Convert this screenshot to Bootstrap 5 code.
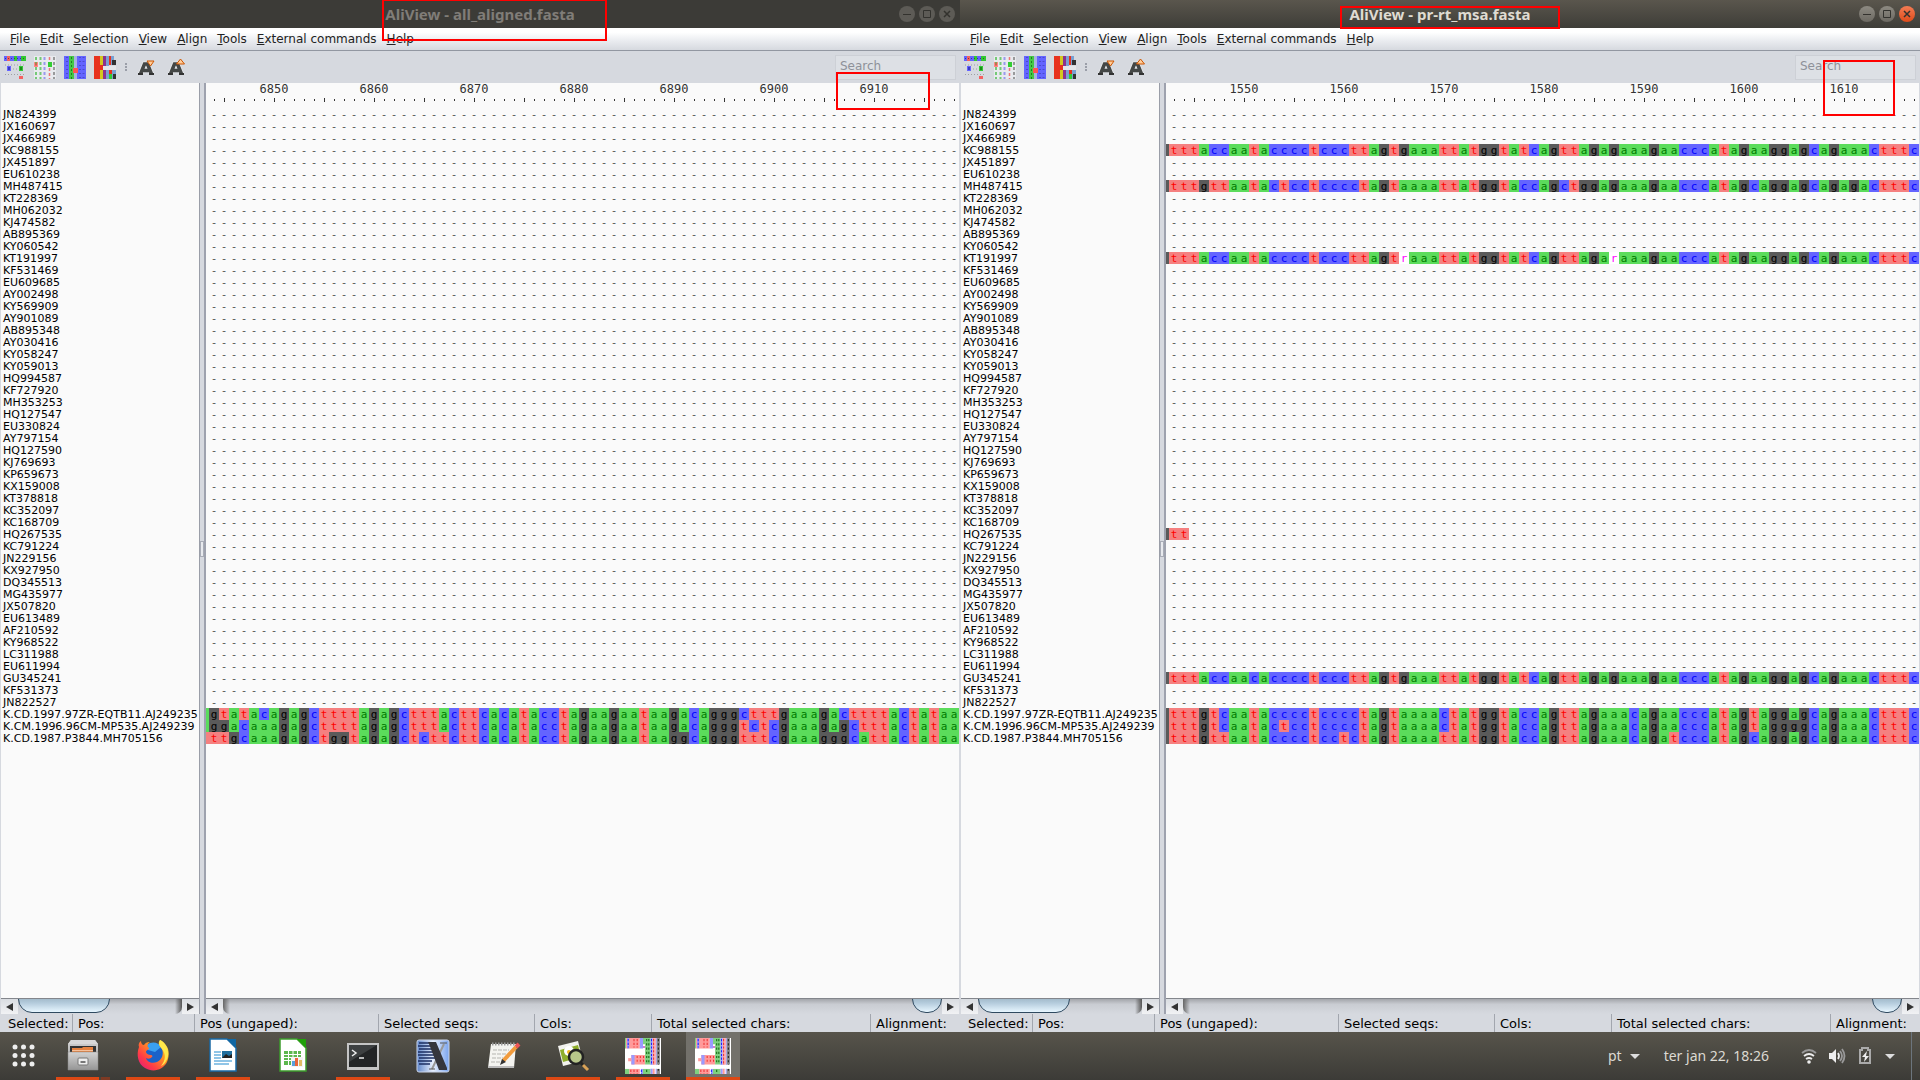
<!DOCTYPE html>
<html lang="en">
<head>
<meta charset="utf-8">
<meta name="viewport" content="width=device-width, initial-scale=1">
<title>AliView</title>
<link href="https://cdn.jsdelivr.net/npm/bootstrap@5.3.0/dist/css/bootstrap.min.css" rel="stylesheet">
<style>
body{font-family:"DejaVu Sans",sans-serif;font-size:12px;line-height:16px;color:#000;background:#3c3b37}
button{border:0;background:none;padding:0;color:inherit}
a{color:inherit;text-decoration:none}
.win{background:#d6d9df;flex:1 1 0;min-width:0}
.titlebar{height:28px;background:#3c3b37;color:#807d78;font:bold 15px/28px "Noto Sans",sans-serif}
.win.active .titlebar{background:linear-gradient(#5a564d,#3e3d38);color:#dfdbd2}
.winbtns{top:6px;right:5px;gap:4px}
.winbtns button{width:16px;height:16px;border-radius:50%;background:#5d5b56;color:#33322e;display:flex}
.active .winbtns button{background:linear-gradient(#8d8a82,#6c6962)}
.active .winbtns .quit{background:linear-gradient(#f47c54,#df4b1a)}
.menubar{height:23px;padding:0 10px;gap:10px;background:linear-gradient(#fff 20%,#e9ebef 60%,#d6d9df);border-bottom:1px solid #9297a1;color:#222}
.menubar a::first-letter{text-decoration:underline}
.toolbar{height:32px;padding:0 4px}
.tbtn{width:22px;height:23px;margin-right:8px;display:block}
.dots{width:2px;height:8px;margin:0 8px 0 1px;border-left:2px dotted #9a9ea8}
.search{width:121px;height:25px;border:1px solid #cdd0d6;background:#dde0e5;padding:0 4px 2px;font-size:12px;color:#555}
.search::placeholder{color:#8e9199;opacity:1}
.names{width:200px;flex:none;background:#fafafa;border-left:1px solid #d6d9df;border-right:1px solid #9a9ea8;overflow:hidden}
.names ul{padding:26px 0 0 2px;margin:0;font-size:11px;line-height:12px;white-space:nowrap}
.splitter{width:6px;flex:none;border-right:2px solid #9ea2ae;background:#d6d9df;display:flex;align-items:center}
.splitter i{width:4px;height:16px;border:1px solid #a9adb7;background:#e8eaee}
.align-pane{background:#fafafa;overflow:hidden;flex:1 1 0;min-width:0;margin-right:1px}
.ruler{height:25px;padding-left:3px;font:12px/13px "DejaVu Sans Mono",monospace;color:#333}
.rc{width:10px;flex:none;height:19px;display:flex;flex-direction:column;align-items:center;justify-content:space-between}
.rc b{font-weight:400;width:40px;text-align:center;height:13px}
.rc i{width:1px;height:2px;background:#333;margin-top:auto;margin-bottom:1px}
.rc.five i{height:4px;margin-bottom:0}
.seq{height:12px;display:flex;font:11px/13px "DejaVu Sans Mono",monospace;color:#555}
.seq span{width:10px;flex:none;text-align:center;height:12px;overflow:hidden}
.seq span:first-child{width:3px}
.sa{background:#5bdc5b;color:#007a00}.sc{background:#6464ff;color:#00f}.sg{background:#5a5a5a;color:#000}.st{background:#f58080;color:#f00}.sr{background:#fff;color:#f0f}
.scroller{height:16px;display:flex;overflow:hidden;border-top:1px solid #83868c;background:linear-gradient(#a3a5aa,#c9ccd2 35%,#d6d9df)}
.scroller button{width:17px;flex:none;background:linear-gradient(#d9dce1,#f1f2f4);display:flex;align-items:center;justify-content:center}
.scroller button::before{content:"";border:4px solid transparent;border-right:7px solid #333;border-left:0}
.scroller button.fwd::before{border-left:7px solid #333;border-right:0}
.thumb{height:28px;margin-top:-14px;border:1px solid #2f4a60;border-radius:14px;background:linear-gradient(#a4bccc 50%,#b4cbdc 65%,#e7f6ff)}
.curve{width:7px;border-radius:0 0 14px 0;background:linear-gradient(90deg,transparent,#555)}
.curve.l{border-radius:0 0 0 14px;background:linear-gradient(270deg,transparent,#666)}
.status{height:18px;font-size:13px;line-height:20px}
.status div{border-left:1px solid #a2a6ae;padding-left:5px;white-space:nowrap;flex:none}
.status div:first-child{border:0;padding-left:8px;width:72px}
.w1{width:122px}.w2{width:184px}.w3{width:156px}.w4{width:117px}.w5{width:219px}
.dock{height:48px;background:linear-gradient(#57544b,#3c3b37);color:#dcd9d2;font:bold 14px/48px "Noto Sans",sans-serif}
.launch{gap:16px}
.launch button{width:54px;height:48px;border-bottom:3px solid transparent;display:flex;align-items:center;justify-content:center;padding-top:3px}
.launch button svg{width:36px;height:36px;display:block}
.launch .apps{width:40px;padding-left:4px}
.launch .run{border-bottom-color:#dd4814}
.launch .multi{border-image:linear-gradient(90deg,#dd4814 76%,#4a443c 76%,#4a443c 80%,#7d3a24 80%) 3}
.launch .sel{background:#73716b}
.tray{padding-right:8px}
.tray button{display:flex;align-items:center}
.caret{border:5px solid transparent;border-top:5px solid #ddd;border-bottom:0}
.note{position:absolute;border:2px solid #f00;pointer-events:none;z-index:5}
.n1{left:382px;top:-1px;width:225px;height:42px}
.n2{right:30px;top:72px;width:94px;height:38px}
.n3{left:380px;top:6px;width:220px;height:23px}
.n4{right:25px;top:60px;width:72px;height:56px}
</style>
<script src="https://cdn.jsdelivr.net/npm/bootstrap@5.3.0/dist/js/bootstrap.bundle.min.js"></script>
</head>
<body class="vh-100 d-flex flex-column overflow-hidden">
<svg width="0" height="0" class="position-absolute" aria-hidden="true">
<defs>
<linearGradient id="fx" x1="1" y1="0" x2="0" y2="1"><stop offset="0" stop-color="#fff44f"/><stop offset=".35" stop-color="#ff9a1f"/><stop offset=".7" stop-color="#ff3b47"/><stop offset="1" stop-color="#d9148a"/></linearGradient>
<linearGradient id="gr" x1="0" y1="0" x2="0" y2="1"><stop offset="0" stop-color="#d2d2d2"/><stop offset="1" stop-color="#969696"/></linearGradient>
<linearGradient id="bx" x1="0" y1="0" x2="1" y2="0"><stop offset="0" stop-color="#5f86c9"/><stop offset=".5" stop-color="#e8f0ff"/><stop offset="1" stop-color="#7aa4ee"/></linearGradient>
<symbol id="ali" viewBox="0 0 34 34"><path fill="#fff" d="M0 0h34v34H0z"/><path fill="#ff9a9a" d="M1 0h13v10H1zM6 16h13v9H6zM26 0h2v34h-2zM4 29h10v5H4z"/><path fill="#9a9aff" d="M2 0h2v10H2zM14 0h3v10h-3zM6 16h3v9H6zM24 0h2v34h-2zM15 29h2v5h-2zM29 0h1v34h-1z"/><path fill="#7fd07f" d="M0 0h1v10H0zM17 0h7v6h-7zM19 6h5v19h-5zM17 29h7v5h-7zM0 29h4v5H0z"/><path fill="#8a8a8a" d="M30 0h3v25h-3zM30 29h3v5h-3z"/><path fill="#ff9a9a" d="M28 0h1v25h-1z"/><path stroke="#e33" stroke-dasharray="2 1.500" d="M8.500 1v8M11.500 1v8M11.500 17v7M14.500 17v7M17.500 17v7M27 1v23M8.500 30v4M5.500 30v4M11.500 30v4"/><path stroke="#161" stroke-dasharray="2 2" d="M20.500 1v23M22.500 1v23M20.500 30v4"/><path stroke="#22f" stroke-dasharray="2 1.500" d="M3 1v8M15.500 30v4M25 1v23"/><path stroke="#222" stroke-dasharray="2 2" d="M31.500 1v32"/><path fill="#ff9a9a" d="M3 19h3v3H3z"/><path fill="#fff" d="M0 25.500h34v3.500H0z"/><path fill="#a0a" d="M17 8h2v1h-2z"/></symbol>
<symbol id="t1" viewBox="0 0 22 23"><path fill="#6464ff" d="M0 0h3v5H0zM6 0h4v5H6zM13 0h4v5h-4zM3 10h4v5H3z"/><path fill="#f56060" d="M3 0h3v5H3zM15 20h4v3h-4z"/><path fill="#32c832" d="M10 0h3v5h-3zM17 0h5v5h-5zM15 10h4v5h-4z"/><path stroke="#222" stroke-opacity=".6" stroke-dasharray="1 2" d="M1 2.500h21"/><path stroke="#888" stroke-opacity=".7" stroke-dasharray="1 2" d="M1 9h21M9 13h6M1 18.500h21"/><path stroke="#118" d="M5 11v3"/><path stroke="#050" d="M17 11v3"/></symbol>
<symbol id="t2" viewBox="0 0 22 23"><path fill="#e8eaee" d="M0 0h22v23H0z"/><path fill="#f88" d="M0 6h4v5H0z"/><path fill="#3c3" d="M14 6h4v5h-4z"/><g stroke-dasharray="3 2" stroke-opacity=".7"><path stroke="#4b4" stroke-width="2" d="M2 1v22M6.500 1v22"/><path stroke="#77e" stroke-width="2" d="M10.500 1v22"/><path stroke="#e44" stroke-width="1.500" d="M15.500 1v5M15.500 12v11M2 7v3"/><path stroke="#777" stroke-width="2" d="M20 1v22"/></g></symbol>
<symbol id="t3" viewBox="0 0 22 23"><path fill="#6464ff" d="M0 0h22v23H0z"/><path fill="#46c846" d="M5 0h5v23H5z"/><path fill="#a9b4e0" d="M10 0h3v23h-3z"/><path fill="#f55" d="M9 12h5v5H9z"/><path stroke="#228" stroke-opacity=".4" stroke-width="2" stroke-dasharray="1 3" d="M3 1v22M16 1v22M19.500 1v22"/><path stroke="#050" stroke-opacity=".6" stroke-dasharray="2 2" d="M7.500 1v22"/></symbol>
<symbol id="t4" viewBox="0 0 22 23"><path fill="#e8321e" d="M0 0h6v23H0z"/><path fill="#d4c81e" d="M6 0h3v9H6zM6 14h3v9H6z"/><path fill="#e8321e" d="M6 9h3v5H6z"/><path fill="#8c328c" d="M9 0h3v23H9z"/><path fill="#7aa0d2" d="M12 0h3v23h-3zM17 0h3v9h-3zM18 14h4v9h-4z"/><path fill="#e8321e" d="M15 0h2v9h-2zM15 14h3v4h-3z"/><path fill="#333" d="M18 4h4v5h-4zM19 18h3v5h-3z"/><path fill="#3c3" d="M15 18h3v5h-3z"/><path fill="#e4e6ea" d="M9 10h13v4H9z"/></symbol>
<symbol id="bigA" viewBox="0 0 22 23"><path fill="none" stroke="#f4f4f4" stroke-opacity=".6" stroke-width="5" d="M5.500 18 9.500 8h3l4 10"/><path fill="none" stroke="#444746" stroke-width="3.500" d="M5.500 18 9.500 8h3l4 10M7 14.500h8"/><path stroke="#333" stroke-width="2" d="M3 18h5M14 18h5"/></symbol>
</defs></svg>

<main class="d-flex flex-grow-1" id="desk" style="min-height:0"></main>

<footer class="dock d-flex justify-content-between">
<div class="launch d-flex">
<button class="apps" aria-label="Show applications"><svg viewBox="0 0 36 36" fill="#eee"><g id="dr"><circle cx="11" cy="9" r="2.500"/><circle cx="19.500" cy="9" r="2.500"/><circle cx="28" cy="9" r="2.500"/></g><use href="#dr" y="8.500"/><use href="#dr" y="17"/></svg></button>
<button class="run multi" aria-label="Files"><svg viewBox="0 0 36 36"><path fill="url(#gr)" d="M6 2h24l3 4v26H3V6z"/><path fill="#d8d8d8" d="M6 2h24l3 4H3z"/><path fill="#333" d="M5 8h26v7H5z"/><path fill="#e58240" d="M7 10h10l1-1h10v6H7z"/><path fill="#f6c09a" d="M7 12h21v1H7z"/><path fill="url(#gr)" stroke="#888" stroke-width=".5" d="M3 14h30v18H3z"/><rect x="13" y="20" width="10" height="7" rx="1" fill="#eee" stroke="#777"/><path fill="#777" d="M15.500 23h5v2h-5z"/></svg></button>
<button class="run" aria-label="Firefox"><svg viewBox="0 0 36 36"><circle cx="18" cy="17" r="12" fill="#1b62c9"/><path fill="#3aa0f0" d="M12 7c4-4 12-3 14 2l-6 5-7-2z"/><path fill="url(#fx)" d="M4 9c-3 8-1 17 6 21 8 5 18 2 22-6 3-7 2-14-2-18-1-2-3-3-5-4-3 4 0 6 2 9 2 5 0 11-5 13-5 2-10 0-11-4 2 1 4 1 6-1 1-1 0-2-1-2-3 0-5-2-5-3 0-2 3-2 3-4-2-1-2-4 1-6-3 0-5 1-6 3-2 0-3-2-3-4-2 1-3 4-2 6z"/><path fill="#ffe74a" d="M25 2c6 3 9 10 8 16-1 5-4 9-7 10 5-6 5-12 1-17-2-3-4-5-2-9z"/></svg></button>
<button class="run" aria-label="Writer"><svg viewBox="0 0 36 36"><path fill="#fff" stroke="#1a6aa5" stroke-width="1.500" d="M5 1h17l9 9v23H5z"/><path fill="#0f67a3" d="M22 1h9v9z"/><path fill="#1f6f9f" d="M17 13h10v7H17z"/><path fill="#222" d="m17 20 4-4 3 2 3-2v4z"/><path stroke="#6cb2e0" stroke-width="1.500" d="M9 14h7M9 17h7M9 20h7M9 23h18M9 26h15"/></svg></button>
<button aria-label="Calc"><svg viewBox="0 0 36 36"><path fill="#fff" stroke="#3c9c2c" stroke-width="1.500" d="M5 1h17l9 9v23H5z"/><path fill="#1fa008" d="M22 1h9v9z"/><path fill="#5cb74d" d="M9 13h17v14H9z"/><path stroke="#fff" d="M9 16.500h17M9 19.500h17M9 22.500h17M13.500 13v14M18 13v14M22.500 13v14"/><path fill="#f4f4f4" d="M16 19h12v10H16z"/><path fill="#5a9fdc" d="M17 23h3v5h-3z"/><path fill="#e8663a" d="M20 20h3v8h-3z"/><path fill="#e0bd65" d="M24 22h3v6h-3z"/></svg></button>
<button class="run" aria-label="Terminal"><svg viewBox="0 0 36 36"><path fill="#c5c5c5" d="M2 5h32v27H2z"/><path fill="#232526" d="M4 7h28v22H4z"/><path fill="#3d4041" d="M4 7h28L4 24z"/><path fill="none" stroke="#eee" stroke-width="1.500" d="m7 12 4 3-4 3M14 20h5"/></svg></button>
<button aria-label="X viewer"><svg viewBox="0 0 36 36"><rect x="2" y="2" width="32" height="32" rx="2" fill="url(#bx)" stroke="#ccd6ea"/><path stroke="#1c2f63" stroke-width="1.500" d="M4 5h12M3 8h13M4 11h14M3 14h17M3 17h17M4 20h16M3 23h14M4 26h11"/><path stroke="#999" stroke-width="2" d="M29 6 17 31"/><path fill="#35363d" d="M13 4h8l11 26v2h-8L14 6z"/><path stroke="#555" d="M25 5h7M14 31h6"/></svg></button>
<button aria-label="Text editor"><svg viewBox="0 0 36 36"><path fill="#f4f4f0" d="M6 6h25l-2 24H3z"/><path fill="#bbb" d="M3 28h26v2H3z"/><path stroke="#999" stroke-width="3" stroke-dasharray="1.500 1.500" d="M7 6h23"/><path stroke="#b5b5b0" stroke-dasharray="4 1" d="M8 12h16M7 16h15M7 20h11M6 24h11"/><path stroke="#f19b3c" stroke-width="4" d="m31 9-13 14"/><path stroke="#e55" stroke-width="4" d="m34 6-3 3"/><path fill="#333" d="m15 27 2-6 4 3z"/></svg></button>
<button class="run" aria-label="Image viewer"><svg viewBox="0 0 36 36"><path fill="#f2f2ee" d="m3 8 20-5 5 20-20 5z"/><path fill="#8fae2c" d="m5 12 18-5 3 12-18 5z"/><circle cx="14" cy="13" r="5" fill="#fff"/><circle cx="14" cy="14" r="2" fill="#f2b721"/><circle cx="21" cy="19" r="7" fill="#b7c68a" stroke="#222" stroke-width="2.500"/><path stroke="#222" stroke-width="3" d="m26 25 3 3"/><path stroke="#d9a257" stroke-width="3" d="m28 27 5 5"/></svg></button>
<button class="run" aria-label="AliView all_aligned"><svg><use href="#ali"/></svg></button>
<button class="run sel" aria-label="AliView pr-rt_msa"><svg><use href="#ali"/></svg></button>
</div>
<div class="tray d-flex">
<button class="me-4">pt<i class="caret ms-2"></i></button>
<button class="me-4">ter jan 22, 18:26</button>
<button class="ms-2" aria-label="System"><svg width="84" height="20" viewBox="0 0 84 20" fill="none" stroke-width="1.800"><path stroke="#999" d="M1 7q7-6 14 0"/><path stroke="#eee" d="M3 10q5-4 10 0M5 13q3-2 6 0"/><circle cx="8" cy="16" r="1.800" fill="#eee"/><path fill="#eee" d="M28 7h3l4-4v14l-4-4h-3z"/><path stroke="#eee" d="M37 7q2 3 0 6"/><path stroke="#999" d="M39 5q4 5 0 10M41 3q5 7 0 14"/><path stroke="#aaa" stroke-width="2" d="M59 4h2V2h6v2h2v13H59z"/><path fill="#eee" d="m66 5-5 6h3l-1 5 5-6h-3z"/></svg></button>
<button class="pe-3 ps-0 border-end border-secondary" aria-label="Power menu"><i class="caret"></i></button>
</div>
</footer>

<script>
const names = `JN824399 JX160697 JX466989 KC988155 JX451897 EU610238 MH487415 KT228369 MH062032 KJ474582 AB895369 KY060542 KT191997 KF531469 EU609685 AY002498 KY569909 AY901089 AB895348 AY030416 KY058247 KY059013 HQ994587 KF727920 MH353253 HQ127547 EU330824 AY797154 HQ127590 KJ769693 KP659673 KX159008 KT378818 KC352097 KC168709 HQ267535 KC791224 JN229156 KX927950 DQ345513 MG435977 JX507820 EU613489 AF210592 KY968522 LC311988 EU611994 GU345241 KF531373 JN822527 K.CD.1997.97ZR-EQTB11.AJ249235 K.CM.1996.96CM-MP535.AJ249239 K.CD.1987.P3844.MH705156`.split(' ');
const gap = '-'.repeat(75);
// The first base of every row is the one cut off by the pane's left edge.
const windows = [
 {title:'AliView - all_aligned.fasta', first:6844, marks:['n1','n2'], seqs:{
  50:'agtatacagagcttttagagctttacttcacatacctagaagaataagacagggctttgaaagacttttactataa',
  51:'aggacaaagagcttttagagctttacttcacatacctagaagaataagacagggtctcgaaagagctttactataa',
  52:'tttgcaaagagctggtagagctcttcttcacatacctagaagaataaggcagggtttcgaaagggcattactataa'}},
 {title:'AliView - pr-rt_msa.fasta', first:1543, active:true, marks:['n3','n4'], seqs:{
  3:'gtttaccaatacccctcccttagtgaaattatggtatcagttagagaaagaacccatagaaggagcagaaactttc',
  6:'gtttgttaatactcctcccctagtaaaattatggtaccagctggagaaagaacccatagcaggagcagagactttc',
  12:'gtttaccaatacccctcccttagtraaattatggtatcagttagaraaagaacccatagaaggagcagaaactttc',
  35:'gtt'+'-'.repeat(73),
  47:'gtttaccaacacccctcccttagtgaaattatggtatcagttagagaaagaacccatagaaggagcagaaactttc',
  50:'gtttgtcaatacccctcccctagtaaaactatggtaccagttagaaacagaacccatagtaggagcagaaactttc',
  51:'gtttgtcaatactcctcccctagtaaaactatggtaccagttagaaacagaacccatagtaggggcagaaactttc',
  52:'gtttgttaatacccctcctctagtaaaattatggtaccagttagaaacagatcccatagcaggagcagaaactttc'}}
];
const bases = s => [...s].map((c,i) => c==='-' ? '<span>-</span>' : `<span class="s${c}">${i?c:''}</span>`).join('');
const row = s => `<div class="seq">${s ? bases(s) : '<span></span>'+bases(gap)}</div>`;
const ruler = f => Array.from({length:75},(_,i)=>{const n=f+i;return `<div class="rc ${n%5?'':'five'}">${n%10?'':`<b>${n}</b>`}<i></i></div>`}).join('');
const tool = (n,l,x='') => `<button class="tbtn" aria-label="${l}"><svg width="22" height="23"><use href="#${n}"/>${x}</svg></button>`;
document.getElementById('desk').innerHTML = windows.map((w,k)=>`
<section class="win d-flex flex-column position-relative ${w.active?'active':''}">
<header class="titlebar text-center position-relative">${w.title}
<div class="winbtns d-flex position-absolute">
<button aria-label="Minimise"><svg width="16" height="16" stroke="currentColor"><path d="M4 8.500h8"/></svg></button>
<button aria-label="Maximise"><svg width="16" height="16" stroke="currentColor" fill="none"><path d="M4.500 4.500h7v7h-7z"/></svg></button>
<button class="quit" aria-label="Close"><svg width="16" height="16" stroke="currentColor" stroke-width="1.500"><path d="m5 5 6 6M11 5l-6 6"/></svg></button></div></header>
<nav class="menubar d-flex align-items-center">${['File','Edit','Selection','View','Align','Tools','External commands','Help'].map(m=>`<a href="#" class="d-inline-block">${m}</a>`).join('')}</nav>
<div class="toolbar d-flex align-items-center">
${tool('t1','Differences')}${tool('t2','Letters')}${tool('t3','Consensus')}${tool('t4','Colours')}<span class="dots"></span>
${tool('bigA','Smaller font','<path fill="#fc9" stroke="#c50" d="M12 5h7l-3.500 5z"/>')}${tool('bigA','Larger font','<path fill="#fc9" stroke="#c50" d="m15.500 3 4 5h-8z"/>')}
<input class="search ms-auto" aria-label="Search" placeholder="Search"></div>
<div class="d-flex flex-grow-1" style="min-height:0">
<div class="names d-flex flex-column"><ul class="list-unstyled flex-grow-1">${names.map(n=>`<li>${n}</li>`).join('')}</ul>
<div class="scroller"><button aria-label="Scroll left"></button><div class="thumb" style="width:92px"></div><span class="curve ms-auto"></span><button class="fwd" aria-label="Scroll right"></button></div></div>
<div class="splitter"><i></i></div>
<div class="align-pane d-flex flex-column"><div class="ruler d-flex">${ruler(w.first)}</div><div class="flex-grow-1">${names.map((n,i)=>row(w.seqs[i])).join('')}</div>
<div class="scroller"><button aria-label="Scroll left"></button><span class="curve l"></span><div class="thumb ms-auto" style="width:30px"></div><button class="fwd" aria-label="Scroll right"></button></div></div></div>
<div class="status d-flex"><div>Selected:</div><div class="w1">Pos:</div><div class="w2">Pos (ungaped):</div><div class="w3">Selected seqs:</div><div class="w4">Cols:</div><div class="w5">Total selected chars:</div><div>Alignment:</div></div>
${w.marks.map(m=>`<div class="note ${m}"></div>`).join('')}
</section>`).join('');
</script>
</body>
</html>
